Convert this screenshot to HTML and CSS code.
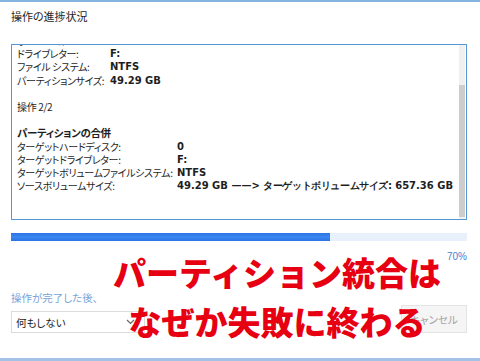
FILE: index.html
```html
<!DOCTYPE html>
<html lang="ja">
<head>
    <meta charset="utf-8">
    <meta name="viewport" content="width=device-width, initial-scale=1.0">
    <title>操作の進捗状況</title>
    <link rel="stylesheet" href="styles.css">
</head>
<body>
    <div class="window">
        <h1 class="title">操作の進捗状況</h1>

        <div class="log">
            <div class="log-body">
                <div class="log-scroll">
                    <div class="rows rows-short">
                        <span>ボリュームラベル:</span><span>-</span>
                        <span>ドライブレター:</span><b>F:</b>
                        <span>ファイル システム:</span><b>NTFS</b>
                        <span>パーティションサイズ:</span><b>49.29 GB</b>
                    </div>
                    <p class="blank"></p>
                    <p>操作 2/2</p>
                    <p class="blank"></p>
                    <p class="heading">パーティションの合併</p>
                    <div class="rows rows-long">
                        <span>ターゲットハードディスク:</span><b>0</b>
                        <span>ターゲットドライブレター:</span><b>F:</b>
                        <span>ターゲットボリュームファイルシステム:</span><b>NTFS</b>
                        <span>ソースボリュームサイズ:</span><b>49.29 GB ——&gt; <span class="kana">ターゲットボリュームサイズ:</span> 657.36 GB</b>
                    </div>
                </div>
            </div>
            <div class="scrollbar"><div class="thumb"></div></div>
        </div>

        <div class="progress"><div class="progress-fill" style="width: 70%"></div></div>
        <div class="percent">70%</div>

        <div class="footer">
            <div class="after">
                <div class="after-label">操作が完了した後、</div>
                <div class="select">
                    <span>何もしない</span>
                    <svg class="chevron" width="9" height="6" viewBox="0 0 9 6">
                        <path d="M1 1l3.5 3.5L8 1" fill="none" stroke="#666" stroke-width="1.2"></path>
                    </svg>
                </div>
            </div>
            <button class="cancel" type="button">キャンセル</button>
        </div>

        <div class="caption">
            <p>パーティション統合は</p>
            <p>なぜか失敗に終わる</p>
        </div>
    </div>
</body>
</html>
```

FILE: styles.css
```css
*,
*::after,
*::before {
    margin: 0;
    padding: 0;
    box-sizing: border-box;
}

body {
    background-color: #fff;
    font-family: "Noto Sans CJK JP", sans-serif;
    color: #1e1e1e;
}

.window {
    position: relative;
    display: flex;
    flex-direction: column;
    height: 361px;
    border-top: 2px solid #86b4e2;
    border-bottom: 3px solid #a3c4e6;
    padding: 6px 13px 0 11px;
    overflow: hidden;
}

.title {
    font-size: 11px;
    font-weight: 400;
    line-height: 16px;
    font-feature-settings: "palt";
    margin-bottom: 20px;
}

.log {
    display: flex;
    height: 176px;
    border: 1px solid #5796d6;
    background-color: #fff;
}

.log-body {
    flex: 1;
    overflow: hidden;
    padding-left: 5px;
    font-size: 10px;
    line-height: 13.2px;
    font-feature-settings: "palt";
    letter-spacing: -0.35px;
}

.log-scroll {
    margin-top: -11px;
}

.log-body b {
    font-family: "DejaVu Sans", sans-serif;
    font-size: 10px;
    font-weight: 700;
    letter-spacing: 0;
}

.log-body .kana {
    letter-spacing: -0.4px;
}

.rows {
    display: grid;
    white-space: nowrap;
}

.rows-short {
    grid-template-columns: 93px 1fr;
}

.rows-long {
    grid-template-columns: 160px 1fr;
}

.blank {
    height: 13.2px;
}

.heading {
    font-weight: 700;
    font-size: 10.5px;
}

.scrollbar {
    width: 6px;
    margin-right: 1px;
    background-color: #f0f0f0;
    padding: 40px 0 2px;
}

.thumb {
    height: 100%;
    background-color: #cdcdcd;
}

.progress {
    height: 8px;
    margin-top: 13px;
    background-color: #e8f1fb;
}

.progress-fill {
    height: 100%;
    background: linear-gradient(#2a73e6, #3b86f0 50%, #2a73e6);
}

.percent {
    text-align: right;
    font-family: "Liberation Sans", sans-serif;
    font-size: 10px;
    line-height: 12px;
    color: #4b80d2;
    margin-top: 10px;
}

.footer {
    display: flex;
    justify-content: space-between;
    align-items: flex-end;
    margin-top: 28px;
}

.after-label {
    font-size: 10.5px;
    line-height: 14px;
    color: #78a3da;
    font-feature-settings: "palt";
    margin-bottom: 6px;
}

.select {
    display: flex;
    align-items: center;
    justify-content: space-between;
    width: 134px;
    height: 22px;
    padding: 0 9px 0 4px;
    border: 1px solid #dcdcdc;
    font-size: 10.5px;
    font-feature-settings: "palt";
}

.cancel {
    width: 66px;
    height: 28px;
    border: 1px solid #e4e4e4;
    background-color: #f5f5f5;
    color: #a3a3a3;
    font-family: "Noto Sans CJK JP", sans-serif;
    font-size: 10.5px;
    font-feature-settings: "palt";
}

.caption {
    position: absolute;
    left: 111px;
    top: 246px;
    width: 332px;
    text-align: center;
    color: #e60012;
    font-size: 33px;
    font-weight: 900;
    line-height: 49px;
}
```
